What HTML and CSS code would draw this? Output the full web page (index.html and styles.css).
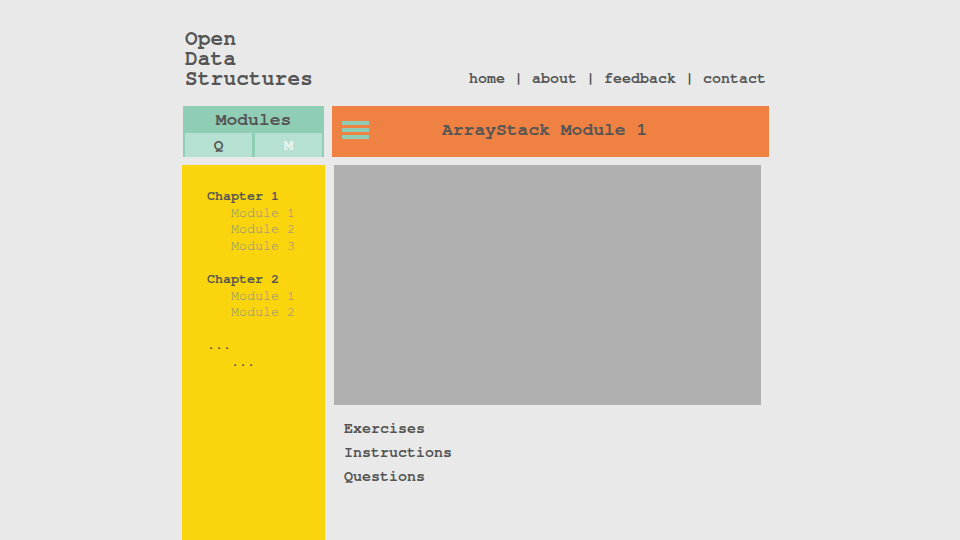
FILE: index.html
```html
<!DOCTYPE html>
<html>
<head>
<meta charset="utf-8">
<link rel="stylesheet" href="styles.css">
</head>
<body>
<div class="wrap">
  <header class="top">
    <div class="logo">Open<br>Data<br>Structures</div>
    <nav class="nav">home | about | feedback | contact</nav>
  </header>
  <div class="bar-row">
    <div class="modules">
      <div class="modules-title">Modules</div>
      <div class="tabs">
        <div class="tab">Q</div>
        <div class="tab tab-off">M</div>
      </div>
    </div>
    <div class="banner">
      <div class="burger"><span></span><span></span><span></span></div>
      <div class="banner-title">ArrayStack Module 1</div>
    </div>
  </div>
  <div class="body-row">
    <aside class="side">
      <div class="chapter">Chapter 1</div>
      <div class="mod">Module 1</div>
      <div class="mod">Module 2</div>
      <div class="mod">Module 3</div>
      <div class="chapter gap">Chapter 2</div>
      <div class="mod">Module 1</div>
      <div class="mod">Module 2</div>
      <div class="chapter gap">...</div>
      <div class="mod dots">...</div>
    </aside>
    <main class="main">
      <div class="viewer"></div>
      <ul class="links">
        <li>Exercises</li>
        <li>Instructions</li>
        <li>Questions</li>
      </ul>
    </main>
  </div>
</div>
</body>
</html>
```
FILE: styles.css
```css
html, body { margin: 0; padding: 0; }
body {
  background: #e9e9e9;
  color: #555555;
  font-family: "FreeMono", "Courier New", monospace;
  font-weight: bold;
  height: 540px;
  overflow: hidden;
}
.wrap { width: 600px; margin: 0 auto; }
.top {
  display: flex;
  justify-content: space-between;
  align-items: flex-end;
  padding: 25px 14px 0 5px;
  height: 64px;
}
.logo { font-size: 21px; line-height: 20px; letter-spacing: 0.2px; }
.nav { font-size: 15px; line-height: 20px; }
.bar-row { display: flex; margin-top: 17px; }
.modules {
  margin-left: 3px;
  width: 141px;
  height: 51px;
  background: #8fcdb5;
  box-sizing: border-box;
  padding: 0 2px 2px;
  display: flex;
  flex-direction: column;
}
.modules-title {
  font-size: 18px;
  text-align: center;
  height: 27px;
  line-height: 29px;
}
.tabs { display: flex; gap: 3px; flex: 1; }
.tab {
  flex: 1;
  background: #b5e0d2;
  text-align: center;
  font-size: 16px;
  line-height: 24px;
}
.tab-off { color: #e9f4ef; }
.banner {
  margin-left: 8px;
  width: 437px;
  height: 51px;
  background: #ef8143;
  display: flex;
  align-items: center;
}
.burger {
  margin-left: 10px;
  width: 27px;
  display: flex;
  flex-direction: column;
  gap: 3px;
  margin-top: -3px;
}
.burger span { display: block; height: 4px; background: #8fcdb5; }
.banner-title {
  margin-left: 73px;
  font-size: 18px;
  margin-top: -4px;
}
.body-row { display: flex; margin-top: 8px; }
.side {
  margin-left: 2px;
  width: 143px;
  height: 380px;
  background: #fad50e;
  box-sizing: border-box;
  padding: 23px 0 0 25px;
  font-size: 13.33px;
  line-height: 16.6px;
}
.chapter.gap { margin-top: 16.6px; }
.mod {
  padding-left: 24px;
  font-weight: normal;
  color: #8e8e8e;
}
.mod.dots { color: #555555; font-weight: bold; }
.main { margin-left: 9px; }
.viewer { width: 427px; height: 240px; background: #b0b0b0; }
.links {
  list-style: none;
  margin: 12px 0 0;
  padding: 0 0 0 10px;
  font-size: 15px;
  line-height: 24px;
}
```
